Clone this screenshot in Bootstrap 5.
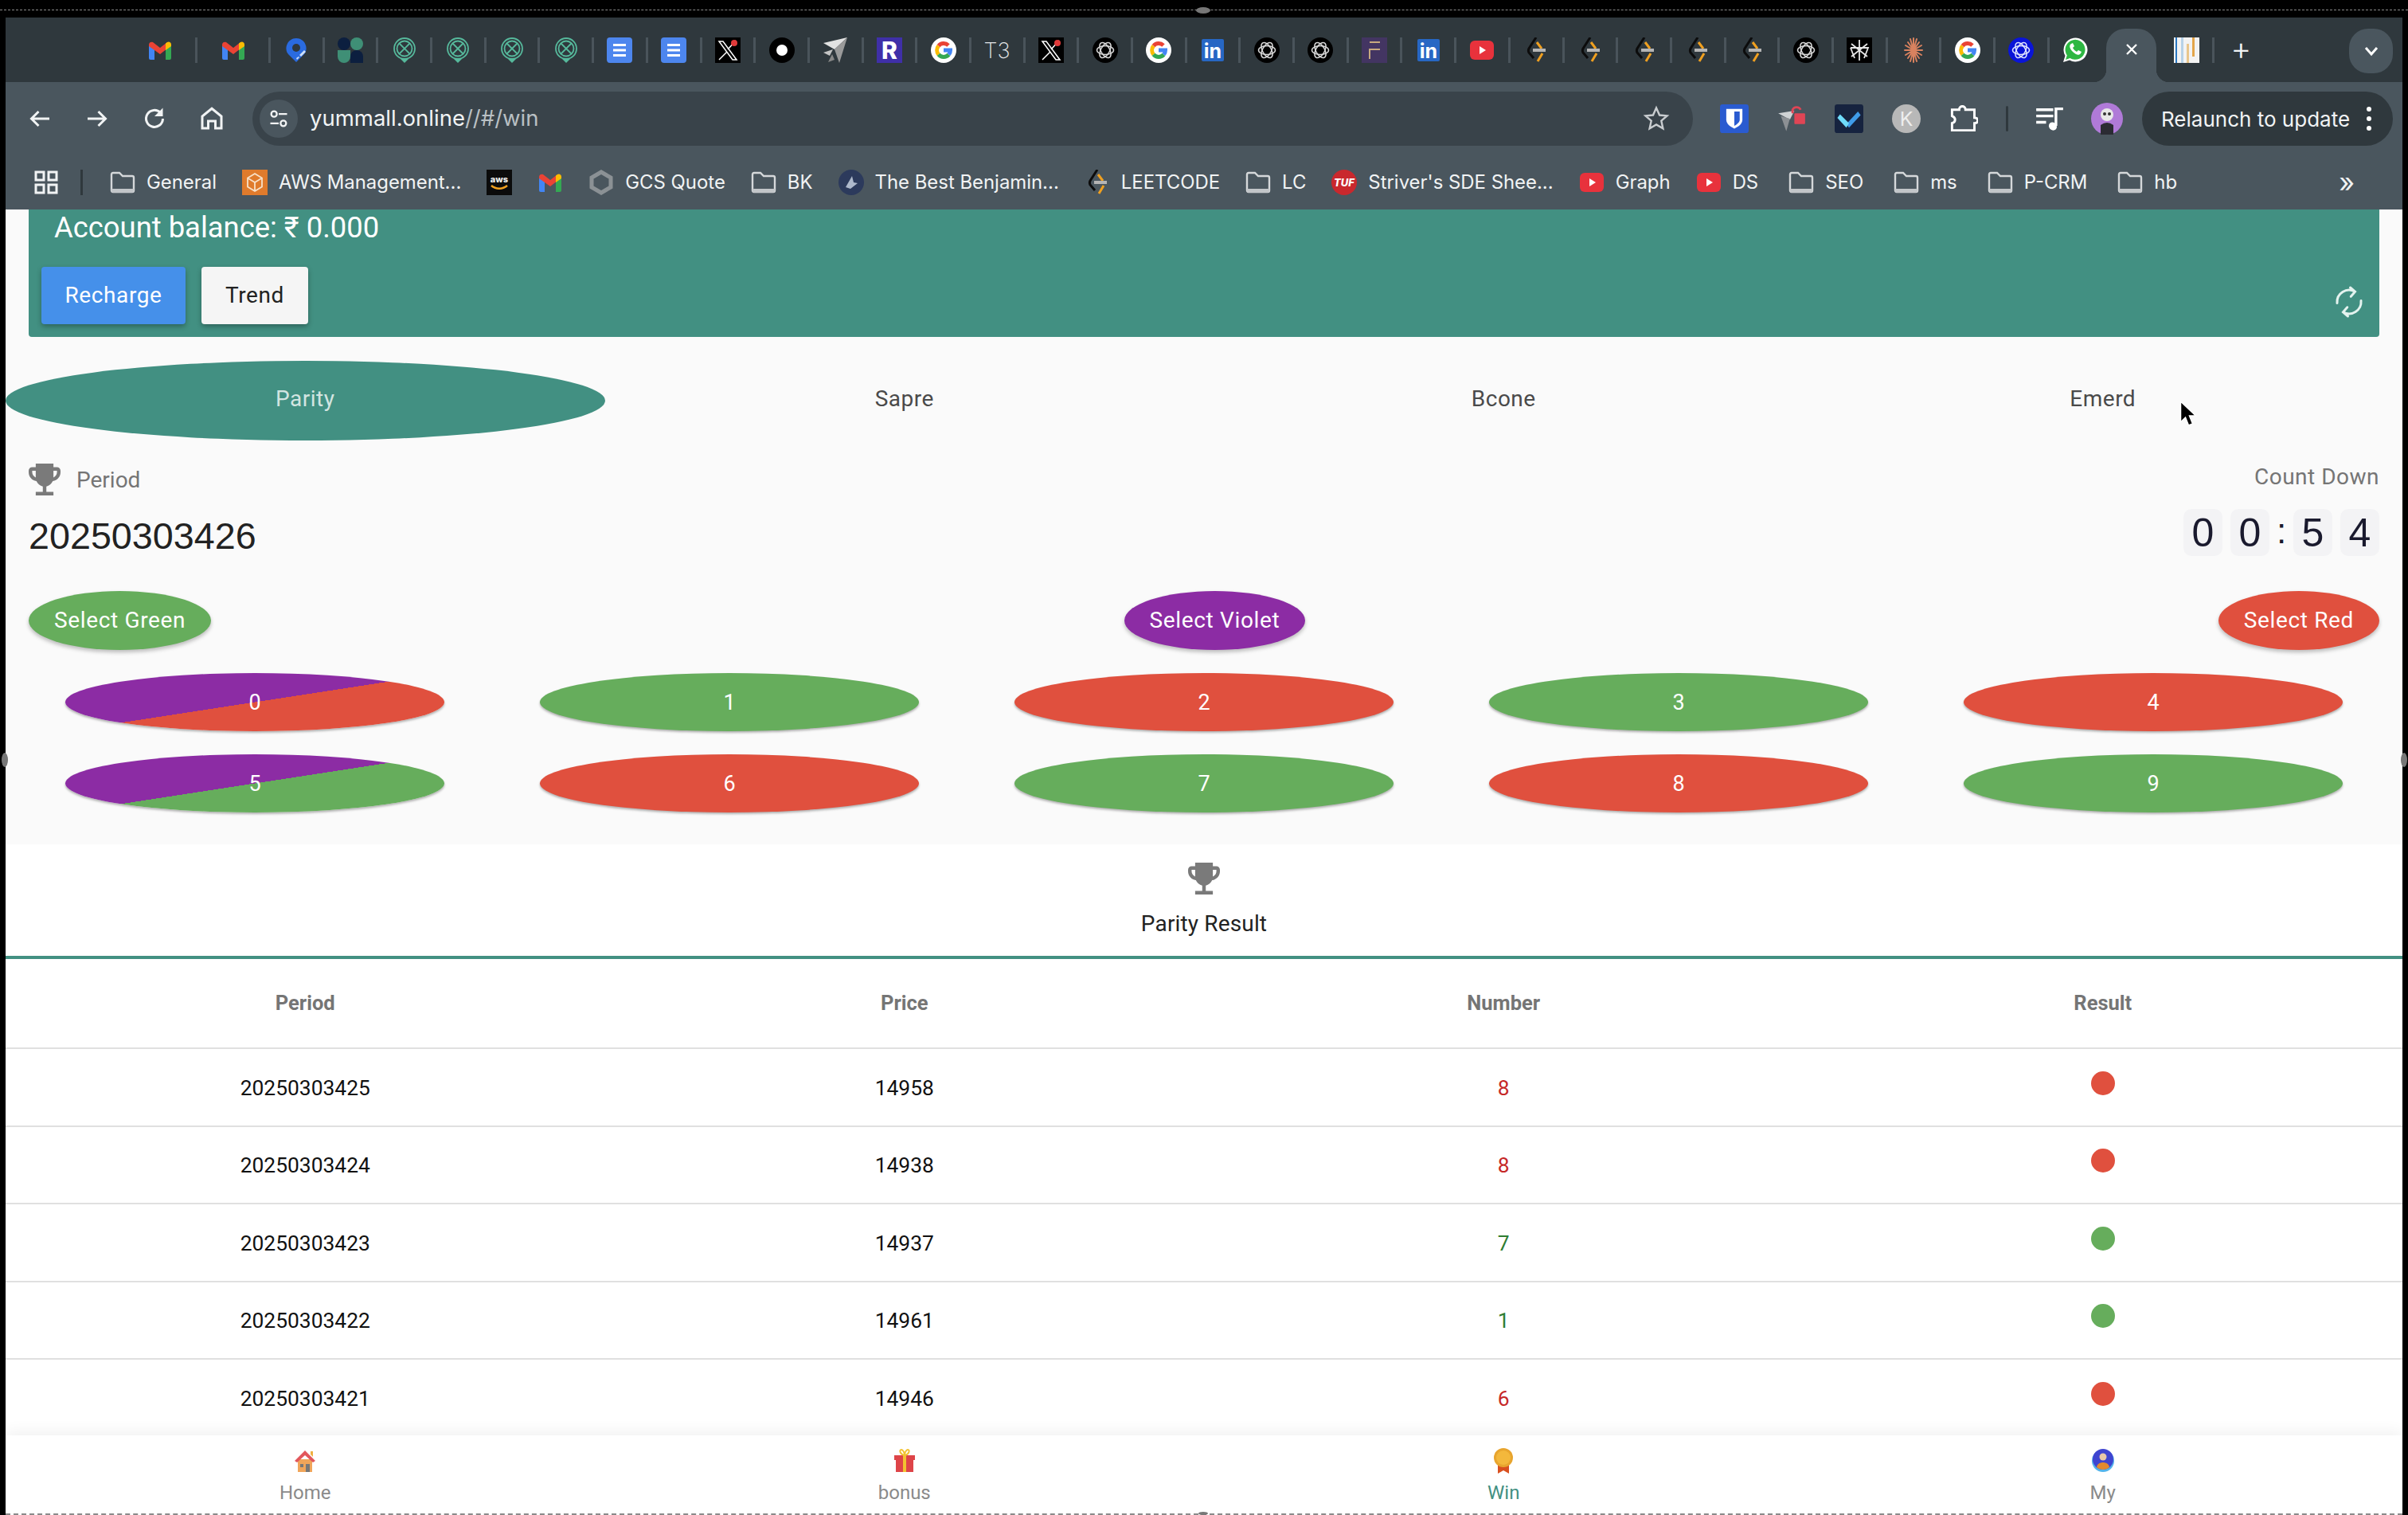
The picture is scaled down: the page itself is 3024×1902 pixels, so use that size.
<!DOCTYPE html>
<html lang="en">

<head>
    <meta charset="UTF-8" />
    <meta name="viewport" content="width=device-width, initial-scale=1.0" />
    <title>yummall.online</title>
    <link href="https://cdn.jsdelivr.net/npm/bootstrap@5.3.3/dist/css/bootstrap.min.css" rel="stylesheet" />
    <style>
        html, body { height: 100%; }
        body { background: #000; overflow: hidden; font-family: Roboto, sans-serif; }

        .frame { height: 1902px; border-left: 7px solid #000; border-right: 7px solid #000; position: relative; }
        .top-edge { height: 22px; padding-top: 12px; background: #000; margin-left: -7px; margin-right: -7px; flex: none; }
        .top-edge div { border-top: 1px dashed #8a8a8a; }

        /* browser chrome */
        .chrome { font-family: Inter, sans-serif; color: #f1f3f4; flex: none; }
        .tab-strip { height: 81px; background: #2f383d; padding-left: 149px; padding-right: 12px; }
        .tab-cell { width: 67.7px; height: 32px; border-right: 3px solid #4a545b; flex: none; display: flex; justify-content: center; }
        .tab-cell.wide { width: 92px; }
        .tab-cell.no-sep { border-right-color: transparent; }
        .tab-active { width: 63px; height: 67px; margin: 14px 0 0 4px; background: #4a565e; border-radius: 24px 24px 0 0; position: relative; flex: none; align-self: flex-start; }
        .tab-active::before, .tab-active::after { content: ""; position: absolute; bottom: 0; width: 16px; height: 16px; }
        .tab-active::before { left: -16px; background: radial-gradient(circle at 0 0, transparent 16px, #4a565e 16.5px); }
        .tab-active::after { right: -16px; background: radial-gradient(circle at 100% 0, transparent 16px, #4a565e 16.5px); }
        .tab-thumb { width: 73px; height: 32px; border-right: 3px solid #4a545b; flex: none; padding-left: 6px; }
        .tab-plus { width: 66px; font-size: 40px; font-weight: 300; line-height: 32px; text-align: center; flex: none; margin-top: -4px; }
        .tab-more { width: 55px; height: 56px; background: #4a565e; border-radius: 24px; flex: none; margin-top: 14px; align-self: flex-start; }
        .fav { width: 32px; height: 32px; display: block; }

        .tool-row { height: 80px; background: #4a565e; padding: 12px 12px 0 7px; }
        .tool-slot { width: 72px; height: 68px; flex: none; display: flex; align-items: center; justify-content: center; }
        .tool-slot svg { width: 36px; height: 36px; }
        .tool-slot svg.avatar-icon { width: 40px; height: 40px; }
        .url-pill { width: 1809px; height: 68px; margin-left: 15px; margin-right: 16px; background: #39434a; border-radius: 34px; flex: none; padding: 0 28px 0 9px; }
        .url-tune { width: 48px; height: 48px; border-radius: 50%; background: #4a565e; margin-right: 15px; }
        .url-text { font-size: 27.5px; line-height: 1; }
        .url-text span { color: #b9c0c4; }
        .tool-sep { width: 36px; height: 32px; flex: none; display: flex; justify-content: center; }
        .tool-sep div { width: 3px; background: #2f383d; border-radius: 2px; }
        .relaunch { width: 315px; height: 68px; margin-left: 8px; background: #2f383d; border-radius: 34px; font-size: 26px; padding-left: 24px; flex: none; }
        .relaunch-dots { margin-right: 26px; }

        .mark-row { height: 80px; background: #4a565e; padding: 12px 0 0 36px; font-size: 23.9px; white-space: nowrap; }
        .mark-sep { width: 3px; height: 32px; background: #2f383d; margin: 0 34px 0 28px; }
        .mark-item { display: flex; align-items: center; gap: 14px; margin-right: 32px; }
        .mark-item.roomy { margin-right: 38px; }
        .mark-item svg { width: 32px; height: 32px; flex: none; }
        .mark-more { margin-left: auto; margin-right: 60px; font-size: 34px; line-height: 1; }

        /* app page */
        .page-area { flex: 1 1 auto; min-height: 0; overflow: hidden; background: #fff; }
        .game-panel { background: #fafafa; padding-bottom: 40px; }
        .balance-box { height: 160px; margin: 0 29px; background: #429082; border-radius: 0 0 4px 4px; color: #fff; padding: 0 16px; }
        .balance-text { font-size: 36.4px; line-height: 44px; padding-left: 16px; padding-top: 1px; }
        .balance-btns { margin-top: 27px; gap: 20px; }
        .btn-balance { height: 72px; font-size: 28px; letter-spacing: .6px; border: 0; border-radius: 4px; box-shadow: 0 3px 6px rgba(0, 0, 0, .3); padding: 0; }
        .btn-recharge { width: 181px; background: #4590ea; color: #fff; }
        .btn-trend { width: 134px; background: #f5f5f5; color: #222; }
        .sync-icon { width: 36px; height: 42px; margin: 16px 4px 0 auto; align-self: center; }

        .game-tabs { margin-top: 30px; height: 100px; }
        .game-tab { color: #4a4a4a; font-size: 28px; letter-spacing: .5px; border-radius: 50%; display: flex; align-items: center; justify-content: center; flex: 1 1 0; padding-bottom: 4px; }
        .game-tab.is-on { background: #429082; color: #d3e5e1; }

        .period-row { margin: 29px 29px 0; }
        .period-label { color: #757575; font-size: 28px; gap: 20px; height: 40px; }
        .period-label span { padding-top: 2px; }
        .trophy { width: 40px; height: 40px; fill: #7a7a7a; display: block; }
        .period-num { font-family: "Liberation Sans", sans-serif; font-size: 46.7px; line-height: 56px; color: #222; margin-top: 23px; }
        .count-label { color: #757575; font-size: 28px; letter-spacing: .5px; line-height: 34px; text-align: right; }
        .count-wrap { margin-top: 23px; gap: 10px; font-family: "Liberation Sans", sans-serif; font-size: 50px; color: #1a1a2e; }
        .count-box { width: 49px; height: 59px; padding-top: 2px; background: #f3f3f5; border-radius: 10px; display: flex; align-items: center; justify-content: center; }
        .count-colon { width: 20px; height: 59px; font-size: 44px; line-height: 56px; text-align: center; margin: 0 -5px; }

        .select-row { margin: 41px 29px 0; }
        .btn-select { height: 74px; border: 0; border-radius: 50%; color: #fff; font-size: 28px; letter-spacing: .65px; padding: 0 32px; box-shadow: 0 3px 5px rgba(0, 0, 0, .25); }
        .tone-green { background: #66ad5c; color: #fff; }
        .tone-violet { background: #8c2ca4; color: #fff; }
        .tone-red { background: #e0503e; color: #fff; }
        .tone-green:hover, .tone-violet:hover, .tone-red:hover { color: #fff; }

        .num-grid { margin: 29px 15px 0; row-gap: 29px; }
        .num-oval { height: 73px; padding-top: 2px; margin: 0 60px; border-radius: 50%; color: #fff; font-size: 27px; display: flex; align-items: center; justify-content: center; box-shadow: 0 2px 3px rgba(0, 0, 0, .3); }
        .split-red { background: linear-gradient(to bottom right, #8c2ca4 50%, #e0503e 50%); }
        .split-green { background: linear-gradient(to bottom right, #8c2ca4 50%, #66ad5c 50%); }

        .result-head { padding: 23px 0 20px; border-bottom: 4px solid #429082; background: #fff; }
        .result-title { font-size: 28px; letter-spacing: .15px; line-height: 40px; color: #222; margin-top: 17px; }

        .result-table { table-layout: fixed; margin: 0; font-size: 26.4px; color: #111; }
        .result-table th { height: 112px; vertical-align: middle; color: #757575; font-size: 25.5px; font-weight: 700; border-bottom: 2px solid #e0e0e0; }
        .result-table td { height: 97.5px; padding-top: 10px; padding-bottom: 6px; border-bottom: 2px solid #e0e0e0; }
        .num-r { color: #c62828 !important; }
        .num-g { color: #2e7d32 !important; }
        .dot { display: inline-block; width: 30px; height: 30px; border-radius: 50%; vertical-align: middle; margin-bottom: 14px; }

        .bottom-nav { height: 100px; background: #fff; flex: none; border-bottom: 2px dashed #8a8a8a; box-shadow: 0 -6px 16px rgba(0, 0, 0, .05); position: relative; }
        .nav-slot { flex: 1 1 0; font-size: 24px; color: #8a8a8a; line-height: 30px; padding-top: 16px; }
        .nav-slot svg { width: 32px; height: 32px; display: block; margin: 0 auto 9px; }
        .nav-slot.is-on { color: #429082; }

        .cursor-arrow { position: absolute; left: 2730px; top: 503px; width: 24px; height: 34px; }
        .edge-blob { position: absolute; background: #777; border-radius: 50%; }
        .blob-l { left: -5px; top: 945px; width: 8px; height: 18px; }
        .blob-r { left: 3008px; top: 945px; width: 8px; height: 18px; }
        .blob-t { left: 1495px; top: 9px; width: 18px; height: 8px; }
        .blob-b { left: 1498px; top: 1898px; width: 12px; height: 4px; }
    </style>
</head>

<body>
    <svg width="0" height="0" class="position-absolute">
        <defs>
            <symbol id="i-gmail" viewBox="0 0 32 32">
                <path fill="#4285f4" d="M2 9v17q0 2 2 2h5V14z" />
                <path fill="#34a853" d="M30 9v17q0 2-2 2h-5V14z" />
                <path fill="#ea4335" d="M2 9c0-3 3-4 5-3l9 7 9-7v8l-9 7-14-10z" />
                <path fill="#fbbc04" d="M23 7.500l2-1.500c2-1.400 5 0 5 3v2l-7 5z" />
            </symbol>
            <symbol id="i-maps" viewBox="0 0 32 32">
                <path fill="#2a6be0" d="M16 31 6 21C0 14 5 1 16 1s16 13 10 20z" />
                <circle cx="16" cy="13" r="5" fill="#2f383d" />
                <path fill="#cfe0f8" d="M20 22l6-6 2 2-6 6zM16 26l3-2 1 1-3 3z" />
            </symbol>
            <symbol id="i-shapes" viewBox="0 0 32 32">
                <circle cx="8" cy="8" r="8" fill="#0c1f3f" />
                <circle cx="24" cy="8" r="8" fill="#3f8f76" />
                <path fill="#3f8f76" d="M0 16h16v8a8 8 0 0 1-16 0z" />
                <path fill="#0c1f3f" d="M16 32v-8a8 8 0 0 1 16 0v8z" />
            </symbol>
            <symbol id="i-xpin" viewBox="0 0 32 32">
                <g fill="none" stroke="#56b99c" stroke-width="1.800">
                    <circle cx="16" cy="14" r="13" />
                    <circle cx="16" cy="14" r="9.500" />
                    <path d="M9 7l14 14M23 7 9 21" />
                </g>
                <path fill="#56b99c" d="M11 27h10l-5 5z" />
            </symbol>
            <symbol id="i-doc" viewBox="0 0 32 32">
                <rect x="0" width="32" height="32" rx="4" fill="#4d86ee" />
                <path fill="#fff" d="M8 8h16v3H8zM8 14.500h16v3H8zM8 21h16v3H8z" />
            </symbol>
            <symbol id="i-x" viewBox="0 0 32 32">
                <rect width="32" height="32" fill="#000" />
                <path fill="none" stroke="#fff" stroke-width="1.500" d="M5 5h5l17 23h-5zM26 4 16 15M15 18 5 28" />
                <circle cx="24" cy="7" r="4" fill="#e03a3a" />
            </symbol>
            <symbol id="i-dot" viewBox="0 0 32 32">
                <circle cx="16" cy="16" r="16" fill="#000" />
                <circle cx="16" cy="16" r="7" fill="#fff" />
            </symbol>
            <symbol id="i-tri" viewBox="0 0 32 32">
                <path fill="#e2e2e2" d="M31 0 1 7l14 8z" />
                <path fill="#9a9a9a" d="M31 0 15 15l6 17z" />
                <path fill="#c4c4c4" d="M13 15 1 19l8 4z" />
                <path fill="#888" d="M12 21l-5 10 8-3z" />
            </symbol>
            <symbol id="i-r" viewBox="0 0 32 32">
                <rect width="32" height="32" fill="#3f2fa8" />
                <text x="16" y="27" font-family="Inter, sans-serif" font-size="30" font-weight="800" text-anchor="middle" fill="#fff">R</text>
            </symbol>
            <symbol id="i-google" viewBox="0 0 32 32">
                <circle cx="16" cy="16" r="16" fill="#fff" />
                <g fill="none" stroke-width="5">
                    <path stroke="#ea4335" d="M9.600 10.600A8.500 8.500 0 0 1 22 10" />
                    <path stroke="#fbbc04" d="M9.600 10.600a8.500 8.500 0 0 0 0 10.800" />
                    <path stroke="#34a853" d="M9.600 21.400a8.500 8.500 0 0 0 12.900.100" />
                    <path stroke="#4285f4" d="M22.500 21.500a8.500 8.500 0 0 0 2-5.500H16" />
                </g>
            </symbol>
            <symbol id="i-t3" viewBox="0 0 32 32">
                <text x="16" y="26" font-family="Inter, sans-serif" font-size="27" font-weight="200" text-anchor="middle" fill="#e4e6e8">T3</text>
            </symbol>
            <symbol id="i-openai" viewBox="0 0 32 32">
                <circle cx="16" cy="16" r="16" fill="#000" />
                <g fill="none" stroke="#d8d8d8" stroke-width="1.500">
                    <ellipse cx="16" cy="16" rx="10.500" ry="5.500" />
                    <ellipse cx="16" cy="16" rx="10.500" ry="5.500" transform="rotate(60 16 16)" />
                    <ellipse cx="16" cy="16" rx="10.500" ry="5.500" transform="rotate(120 16 16)" />
                </g>
            </symbol>
            <symbol id="i-openai-blue" viewBox="0 0 32 32">
                <circle cx="16" cy="16" r="16" fill="#0a14d8" />
                <g fill="none" stroke="#dfe3ff" stroke-width="1.500">
                    <ellipse cx="16" cy="16" rx="10.500" ry="5.500" />
                    <ellipse cx="16" cy="16" rx="10.500" ry="5.500" transform="rotate(60 16 16)" />
                    <ellipse cx="16" cy="16" rx="10.500" ry="5.500" transform="rotate(120 16 16)" />
                </g>
            </symbol>
            <symbol id="i-in" viewBox="0 0 32 32">
                <rect x="2" y="2" width="28" height="28" rx="2" fill="#2767c4" />
                <text x="16" y="26" font-family="Inter, sans-serif" font-size="25" font-weight="700" text-anchor="middle" fill="#fff">in</text>
            </symbol>
            <symbol id="i-f" viewBox="0 0 32 32">
                <rect width="32" height="32" fill="#433562" />
                <path fill="none" stroke="#c7a97f" stroke-width="2" d="M10 6h13M10 27V15h13" />
            </symbol>
            <symbol id="i-yt" viewBox="0 0 32 32">
                <rect x="1" y="4" width="30" height="24" rx="6" fill="#e8323c" />
                <path fill="#fff" d="M13 11l8 5-8 5z" />
            </symbol>
            <symbol id="i-leet" viewBox="0 0 32 32">
                <path fill="none" stroke="#0c0c0c" stroke-width="3" d="M16 0 7 14c-1 2-1 3 0 5l6 7" />
                <path fill="none" stroke="#f0a020" stroke-width="3" d="M17 6l6 8M24 20l-6 10" />
                <path fill="none" stroke="#b5b5b5" stroke-width="4" d="M12 16h16" />
            </symbol>
            <symbol id="i-star" viewBox="0 0 32 32">
                <rect width="32" height="32" fill="#000" />
                <path fill="none" stroke="#e6e6e6" stroke-width="1.800" d="M16 3v26M6 8l20 16M26 8 6 24M5 13h22l-5 13M5 13l5 13" />
            </symbol>
            <symbol id="i-claude" viewBox="0 0 32 32">
                <g stroke="#d9825f" stroke-width="2" stroke-linecap="round">
                    <path d="M16 1v30M5 16h22M9 6l14 20M23 6 9 26M12 2l8 28M20 2l-8 28M6 10l20 12M26 10 6 22" />
                </g>
            </symbol>
            <symbol id="i-wa" viewBox="0 0 32 32">
                <path fill="#fff" d="M1 31l2.500-8A15 15 0 1 1 9 28.500z" />
                <path fill="#2db742" d="M4 28l1.800-5.500A12.500 12.500 0 1 1 9.500 26z" />
                <path fill="#fff" d="M11 8c-3 2-2 6 2 10s8 5 10 2l1-2-4-2-2 2c-2-1-4-3-5-5l2-2-2-4z" />
            </symbol>
            <symbol id="i-thumb" viewBox="0 0 32 32">
                <rect width="32" height="32" fill="#f3f3f3" />
                <path fill="#2b78c2" d="M2 0h2v32H2z" />
                <path fill="#b7d2e8" d="M9 0h3v32H9z" />
                <path fill="#e9c68c" d="M16 8h3v24h-3z" />
                <path fill="#e3a54a" d="M23 0h3v24h-3z" />
            </symbol>
            <symbol id="i-folder" viewBox="0 0 32 32">
                <path fill="none" stroke="#d5d8da" stroke-width="2.400" d="M2 6q0-2 2-2h8l4 4h12q2 0 2 2v16q0 2-2 2H4q-2 0-2-2z" />
                <path fill="#c2c6c9" d="M2 24h28v3q0 2-2 2H4q-2 0-2-2z" />
            </symbol>
            <symbol id="i-aws-box" viewBox="0 0 32 32">
                <rect width="32" height="32" fill="#e07b2c" />
                <path fill="none" stroke="#f8e1c8" stroke-width="1.800" d="M16 5l9 5.500v11L16 27l-9-5.500v-11zM7 10.500l9 5.500 9-5.500M16 16v11" />
            </symbol>
            <symbol id="i-aws" viewBox="0 0 32 32">
                <rect width="32" height="32" fill="#0b0b0b" />
                <text x="16" y="16" font-family="Inter, sans-serif" font-size="11" font-weight="800" text-anchor="middle" fill="#eee">aws</text>
                <path fill="none" stroke="#f0a020" stroke-width="2.500" d="M6 20c6 5 14 5 20 0" />
            </symbol>
            <symbol id="i-gcs" viewBox="0 0 32 32">
                <path fill="none" stroke="#8b9195" stroke-width="5" d="M16 3l12 7v12l-12 7-12-7V10z" />
            </symbol>
            <symbol id="i-ben" viewBox="0 0 32 32">
                <circle cx="16" cy="16" r="16" fill="#2c3a5c" />
                <path fill="#aeb9cc" d="M9 22l8-14 2 8 5 1-9 7z" />
            </symbol>
            <symbol id="i-tuf" viewBox="0 0 32 32">
                <circle cx="16" cy="16" r="16" fill="#c9282d" />
                <text x="16" y="21" font-family="Inter, sans-serif" font-size="13" font-style="italic" font-weight="800" text-anchor="middle" fill="#fff">TUF</text>
            </symbol>
            <symbol id="i-trophy" viewBox="3 3 18 18">
                <path d="M19 5h-2V3H7v2H5c-1.100 0-2 .9-2 2v1c0 2.550 1.920 4.630 4.390 4.940.63 1.500 1.980 2.630 3.610 2.960V19H7v2h10v-2h-4v-3.100c1.630-.33 2.980-1.460 3.610-2.960C19.080 12.630 21 10.550 21 8V7c0-1.100-.9-2-2-2zM5 8V7h2v3.820C5.840 10.400 5 9.300 5 8zm14 0c0 1.300-.84 2.400-2 2.820V7h2v1z" />
            </symbol>
        </defs>
    </svg>

    <div class="frame d-flex flex-column">
        <div class="top-edge"><div></div></div>

        <div class="chrome">
            <div id="tabs" class="tab-strip d-flex align-items-center"></div>

            <div class="tool-row d-flex align-items-start">
                <div class="tool-slot"><svg viewBox="0 0 24 24" fill="none" stroke="#f1f3f4" stroke-width="2"><path d="M20 12H5M11 6l-6 6 6 6" /></svg></div>
                <div class="tool-slot"><svg viewBox="0 0 24 24" fill="none" stroke="#f1f3f4" stroke-width="2"><path d="M4 12h15M13 6l6 6-6 6" /></svg></div>
                <div class="tool-slot"><svg viewBox="0 0 24 24" fill="none" stroke="#f1f3f4" stroke-width="2"><path d="M19 12a7 7 0 1 1-2-5" /><path fill="#f1f3f4" stroke="none" d="M19 3v7h-7z" /></svg></div>
                <div class="tool-slot"><svg viewBox="0 0 24 24" fill="none" stroke="#f1f3f4" stroke-width="2"><path d="M4 20V10l8-6.500L20 10v10h-5v-6H9v6z" /></svg></div>
                <div class="url-pill d-flex align-items-center">
                    <div class="url-tune d-flex align-items-center justify-content-center"><svg width="28" height="28" viewBox="0 0 24 24" fill="none" stroke="#f1f3f4" stroke-width="2"><circle cx="7" cy="7" r="3" /><path d="M12 7h9M3 17h9" /><circle cx="17" cy="17" r="3" /></svg></div>
                    <div class="url-text flex-grow-1">yummall.online<span>//#/win</span></div>
                    <svg width="36" height="36" viewBox="0 0 24 24" fill="none" stroke="#c9cdd0" stroke-width="1.600"><path d="M12 3l2.700 6 6.300.6-4.800 4.200 1.400 6.400L12 17l-5.600 3.200 1.400-6.400L3 9.600 9.300 9z" /></svg>
                </div>
                <div class="tool-slot"><svg viewBox="0 0 32 32"><rect width="32" height="32" rx="3" fill="#2a5bd0" /><path fill="#fff" d="M7 5h18v12c0 5-5 8-9 10-4-2-9-5-9-10z" /><path fill="#2a5bd0" d="M16 8h6v9c0 3-3 5-6 7z" /></svg></div>
                <div class="tool-slot"><svg viewBox="0 0 32 32"><path fill="#cfd2d4" d="M1 10l18-3-5 10z" /><path fill="#8c9094" d="M4 13l10 3-4 14z" /><path fill="none" stroke="#e04555" stroke-width="2.500" d="M17 10V6a5 5 0 0 1 9 0" /><rect x="19" y="10" width="12" height="12" rx="1" fill="#e04555" /></svg></div>
                <div class="tool-slot"><svg viewBox="0 0 32 32"><rect width="32" height="32" rx="3" fill="#16233f" /><path fill="#3f9be8" d="M13 22 26 8l3 4-13 14z" /><path fill="#6fdcfb" d="M3 15l3-4 10 10-3 5z" /></svg></div>
                <div class="tool-slot"><svg viewBox="0 0 32 32"><circle cx="16" cy="16" r="16" fill="#b8b8b8" /><text x="16" y="24" font-family="Inter, sans-serif" font-size="22" text-anchor="middle" fill="#eee">K</text></svg></div>
                <div class="tool-slot"><svg viewBox="0 0 32 32" fill="none" stroke="#fff" stroke-width="2.600"><path d="M3 6h8c0-5 7-5 7 0h10v9c5 0 5 6 0 6v8H3v-8c4-1 5-6 0-8z" /></svg></div>
                <div class="tool-sep align-self-center"><div></div></div>
                <div class="tool-slot"><svg viewBox="0 0 32 32" fill="none" stroke="#fff" stroke-width="3"><path d="M1 6h19M1 13h19M1 20h11M23 24V5h8" /><circle cx="19" cy="24" r="4" fill="#fff" stroke="none" /><circle cx="20" cy="25" r="4" fill="#fff" stroke="none" /></svg></div>
                <div class="tool-slot"><svg viewBox="0 0 40 40" class="avatar-icon"><circle cx="20" cy="20" r="20" fill="#b07ad8" /><circle cx="20" cy="15" r="8" fill="#e8e8e8" /><circle cx="17" cy="14" r="2" fill="#333" /><circle cx="23" cy="14" r="2" fill="#333" /><path fill="#2b2b33" d="M12 40V28q8-6 16 0v12z" /></svg></div>
                <div class="relaunch d-flex align-items-center justify-content-between">
                    <span>Relaunch to update</span>
                    <svg class="relaunch-dots" width="8" height="32" viewBox="0 0 8 32" fill="#fff"><circle cx="4" cy="4" r="3" /><circle cx="4" cy="16" r="3" /><circle cx="4" cy="28" r="3" /></svg>
                </div>
            </div>

            <div class="mark-row d-flex align-items-center">
                <svg width="30" height="30" viewBox="0 0 30 30" fill="none" stroke="#f1f3f4" stroke-width="3"><path d="M2 2h10v10H2zM18 2h10v10H18zM2 18h10v10H2zM18 18h10v10H18z" /></svg>
                <div class="mark-sep"></div>
                <div class="mark-item"><svg><use href="#i-folder" /></svg>General</div>
                <div class="mark-item"><svg><use href="#i-aws-box" /></svg>AWS Management...</div>
                <div class="mark-item"><svg><use href="#i-aws" /></svg></div>
                <div class="mark-item"><svg><use href="#i-gmail" /></svg></div>
                <div class="mark-item"><svg><use href="#i-gcs" /></svg>GCS Quote</div>
                <div class="mark-item"><svg><use href="#i-folder" /></svg>BK</div>
                <div class="mark-item"><svg><use href="#i-ben" /></svg>The Best Benjamin...</div>
                <div class="mark-item"><svg><use href="#i-leet" /></svg>LEETCODE</div>
                <div class="mark-item"><svg><use href="#i-folder" /></svg>LC</div>
                <div class="mark-item"><svg><use href="#i-tuf" /></svg>Striver's SDE Shee...</div>
                <div class="mark-item"><svg><use href="#i-yt" /></svg>Graph</div>
                <div class="mark-item roomy"><svg><use href="#i-yt" /></svg>DS</div>
                <div class="mark-item roomy"><svg><use href="#i-folder" /></svg>SEO</div>
                <div class="mark-item roomy"><svg><use href="#i-folder" /></svg>ms</div>
                <div class="mark-item roomy"><svg><use href="#i-folder" /></svg>P-CRM</div>
                <div class="mark-item"><svg><use href="#i-folder" /></svg>hb</div>
                <div class="mark-more">»</div>
            </div>
        </div>

        <div class="page-area">
            <div class="game-panel">
                <div class="balance-box">
                    <div class="balance-text">Account balance: ₹ 0.000</div>
                    <div class="balance-btns d-flex">
                        <button class="btn btn-balance btn-recharge">Recharge</button>
                        <button class="btn btn-balance btn-trend">Trend</button>
                        <svg class="sync-icon" viewBox="0 0 24 28" fill="none" stroke="#e4f3ef" stroke-width="2" stroke-linecap="round">
                            <path d="M2 15a10 10 0 0 1 15-9.500M22 13a10 10 0 0 1-15 9.500M13 2l4 3.500-3.500 4M11 26l-4-3.500 3.500-4" />
                        </svg>
                    </div>
                </div>

                <div class="game-tabs d-flex">
                    <div class="game-tab is-on">Parity</div>
                    <div class="game-tab">Sapre</div>
                    <div class="game-tab">Bcone</div>
                    <div class="game-tab">Emerd</div>
                </div>

                <div class="period-row d-flex justify-content-between">
                    <div>
                        <div class="period-label d-flex align-items-center"><svg class="trophy"><use href="#i-trophy" /></svg><span>Period</span></div>
                        <div class="period-num">20250303426</div>
                    </div>
                    <div>
                        <div class="count-label">Count Down</div>
                        <div class="count-wrap d-flex">
                            <div class="count-box">0</div>
                            <div class="count-box">0</div>
                            <div class="count-colon">:</div>
                            <div class="count-box">5</div>
                            <div class="count-box">4</div>
                        </div>
                    </div>
                </div>

                <div class="select-row d-flex justify-content-between">
                    <button class="btn btn-select tone-green">Select Green</button>
                    <button class="btn btn-select tone-violet">Select Violet</button>
                    <button class="btn btn-select tone-red">Select Red</button>
                </div>

                <div class="num-grid row row-cols-5 g-0">
                    <div class="col"><div class="num-oval split-red">0</div></div>
                    <div class="col"><div class="num-oval tone-green">1</div></div>
                    <div class="col"><div class="num-oval tone-red">2</div></div>
                    <div class="col"><div class="num-oval tone-green">3</div></div>
                    <div class="col"><div class="num-oval tone-red">4</div></div>
                    <div class="col"><div class="num-oval split-green">5</div></div>
                    <div class="col"><div class="num-oval tone-red">6</div></div>
                    <div class="col"><div class="num-oval tone-green">7</div></div>
                    <div class="col"><div class="num-oval tone-red">8</div></div>
                    <div class="col"><div class="num-oval tone-green">9</div></div>
                </div>
            </div>

            <div class="result-head text-center">
                <svg class="trophy mx-auto"><use href="#i-trophy" /></svg>
                <div class="result-title">Parity Result</div>
            </div>

            <table class="table result-table text-center align-middle">
                <thead>
                    <tr><th>Period</th><th>Price</th><th>Number</th><th>Result</th></tr>
                </thead>
                <tbody>
                    <tr><td>20250303425</td><td>14958</td><td class="num-r">8</td><td><span class="dot tone-red"></span></td></tr>
                    <tr><td>20250303424</td><td>14938</td><td class="num-r">8</td><td><span class="dot tone-red"></span></td></tr>
                    <tr><td>20250303423</td><td>14937</td><td class="num-g">7</td><td><span class="dot tone-green"></span></td></tr>
                    <tr><td>20250303422</td><td>14961</td><td class="num-g">1</td><td><span class="dot tone-green"></span></td></tr>
                    <tr><td>20250303421</td><td>14946</td><td class="num-r">6</td><td><span class="dot tone-red"></span></td></tr>
                </tbody>
            </table>
        </div>

        <div class="bottom-nav d-flex text-center">
            <div class="nav-slot">
                <svg viewBox="0 0 32 32"><path fill="#f0a55a" d="M7 14h18v16H7z" /><path fill="#e2575c" d="M16 3 3 16l3 2L16 9l10 9 3-2z" /><path fill="#f0b040" d="M23 4h3v7l-3-3z" /><path fill="#777" d="M17 20h5v10h-5zM10 20h4v4h-4z" /></svg>
                Home
            </div>
            <div class="nav-slot">
                <svg viewBox="0 0 32 32"><path fill="#de4448" d="M3 9h26v6h-2v15H5V15H3z" /><path fill="#f2c230" d="M14 9h4v21h-4z" /><path fill="none" stroke="#f2c230" stroke-width="2" d="M16 9c-6-1-7-7-4-7 2 0 4 4 4 7 0-3 2-7 4-7 3 0 2 6-4 7z" /></svg>
                bonus
            </div>
            <div class="nav-slot is-on">
                <svg viewBox="0 0 32 32"><path fill="#d9501f" d="M9 18h14v14l-7-4-7 4z" /><circle cx="16" cy="12" r="12" fill="#e8a52e" /><circle cx="16" cy="12" r="9" fill="#f3b83c" /></svg>
                Win
            </div>
            <div class="nav-slot">
                <svg viewBox="0 0 32 32"><circle cx="16" cy="16" r="14" fill="#54b4ea" /><circle cx="16" cy="14" r="13" fill="#3f45d0" /><circle cx="16" cy="11" r="4.500" fill="#e9c9a8" /><path fill="#e28a2f" d="M8 24c1-8 15-8 16 0-4 4-12 4-16 0z" /></svg>
                My
            </div>
        </div>

        <svg class="cursor-arrow" viewBox="0 0 24 34"><path fill="#000" stroke="#fff" stroke-width="1.500" d="M1.500 1v26l6-6 4 10 5-2-4-10h8z" /></svg>
        <div class="edge-blob blob-l"></div>
        <div class="edge-blob blob-r"></div>
        <div class="edge-blob blob-t"></div>
        <div class="edge-blob blob-b"></div>
    </div>

    <script>
        // favicons of the open tabs, left to right
        const tabIcons = ["gmail", "gmail", "maps", "shapes", "xpin", "xpin", "xpin", "xpin", "doc", "doc", "x", "dot", "tri", "r",
            "google", "t3", "x", "openai", "google", "in", "openai", "openai", "f", "in", "yt", "leet", "leet", "leet", "leet", "leet",
            "openai", "star", "claude", "google", "openai-blue", "wa"];

        const strip = document.getElementById("tabs");
        tabIcons.forEach((name, i) => {
            const cell = document.createElement("div");
            cell.className = "tab-cell" + (i < 2 ? " wide" : "") + (i === tabIcons.length - 1 ? " no-sep" : "");
            cell.innerHTML = `<svg class="fav"><use href="#i-${name}" /></svg>`;
            strip.appendChild(cell);
        });

        strip.insertAdjacentHTML("beforeend", `
            <div class="tab-active d-flex align-items-center justify-content-center">
                <svg width="20" height="20" viewBox="0 0 20 20" stroke="#fff" stroke-width="2.400" class="mb-3"><path d="M4 4l12 12M16 4 4 16" /></svg>
            </div>
            <div class="tab-thumb d-flex justify-content-center"><svg class="fav"><use href="#i-thumb" /></svg></div>
            <div class="tab-plus">+</div>
            <div class="ms-auto tab-more d-flex align-items-center justify-content-center">
                <svg width="20" height="14" viewBox="0 0 20 14" fill="none" stroke="#fff" stroke-width="3"><path d="M3 3l7 8 7-8" /></svg>
            </div>`);
    </script>
    <script src="https://cdn.jsdelivr.net/npm/bootstrap@5.3.3/dist/js/bootstrap.bundle.min.js"></script>
</body>

</html>
